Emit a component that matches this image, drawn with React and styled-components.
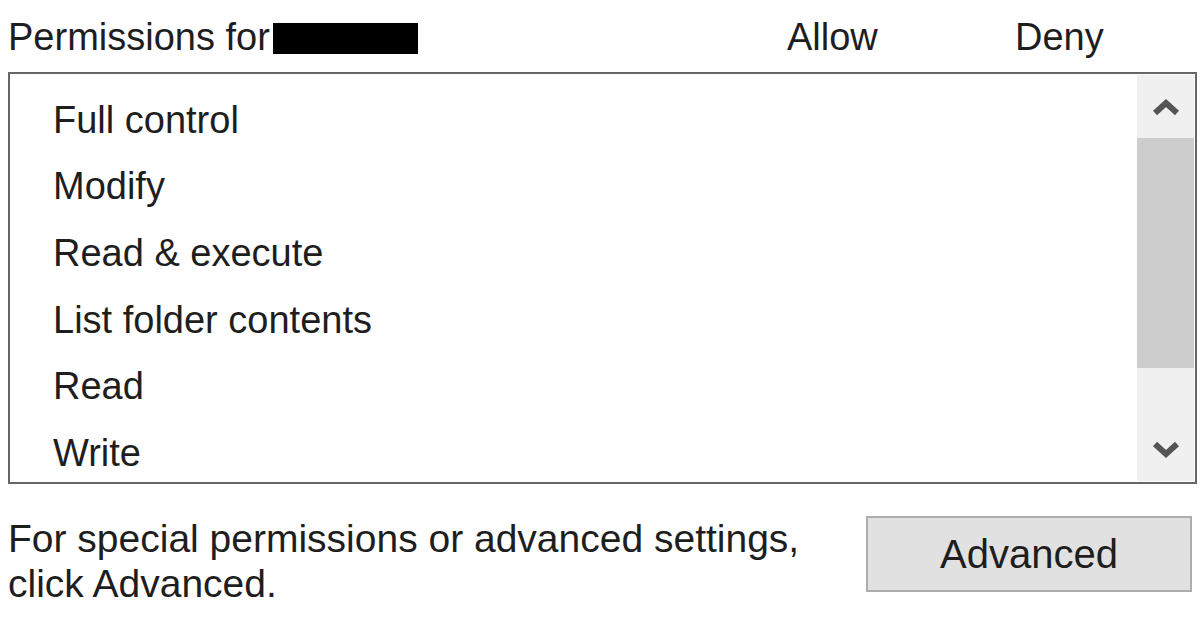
import React from "react";
import styled, { createGlobalStyle } from "styled-components";

const GlobalStyle = createGlobalStyle`
  html, body {
    margin: 0;
    padding: 0;
    background: #ffffff;
  }
  body {
    font-family: "Liberation Sans", Arial, sans-serif;
    color: #1e1e1e;
  }
`;

const Dialog = styled.div`
  width: 1200px;
  height: 627px;
  overflow: hidden;
  display: flex;
  flex-direction: column;
  font-size: 38px;
`;

const HeaderRow = styled.div`
  height: 72px;
  display: grid;
  grid-template-columns: 779px 228px 1fr;
  align-items: center;
  padding-left: 8px;
  padding-top: 2px;
  box-sizing: border-box;
`;

const HeaderLabel = styled.div`
  display: flex;
  align-items: center;
`;

const Redacted = styled.span`
  display: inline-block;
  width: 145px;
  height: 31px;
  background: #000;
  margin-left: 3px;
  margin-top: 2px;
`;

const ColumnTitle = styled.div`
  white-space: nowrap;
`;

const ListBox = styled.div`
  margin-left: 8px;
  width: 1189px;
  height: 412px;
  box-sizing: border-box;
  border: 2px solid #666666;
  display: flex;
  overflow: hidden;
`;

const Rows = styled.div`
  flex: 1;
  padding-top: 13px;
  padding-left: 43px;
  display: flex;
  flex-direction: column;
`;

const Row = styled.div`
  height: 66.6px;
  flex-shrink: 0;
  display: flex;
  align-items: center;
`;

const ScrollBar = styled.div`
  width: 57px;
  margin: 1px 1px 1px 0;
  background: #f0f0f0;
  display: flex;
  flex-direction: column;
`;

const ScrollButton = styled.div`
  height: ${(p) => p.$h}px;
  display: flex;
  align-items: center;
  justify-content: center;
  flex-shrink: 0;
`;

const Thumb = styled.div`
  height: 230px;
  background: #cdcdcd;
  flex-shrink: 0;
`;

const Track = styled.div`
  flex: 1;
`;

const Footer = styled.div`
  display: flex;
  justify-content: space-between;
  align-items: flex-start;
  padding: 32px 8px 0 8px;
`;

const Note = styled.div`
  font-size: 39px;
  line-height: 45px;
`;

const Button = styled.div`
  width: 326px;
  height: 76px;
  box-sizing: border-box;
  background: #e1e1e1;
  border: 2px solid #adadad;
  display: flex;
  align-items: center;
  justify-content: center;
  font-size: 40px;
`;

const Chevron = ({ up }) => (
  <svg width="30" height="18" viewBox="0 0 30 18">
    <polyline
      points={up ? "4,15 15,5 26,15" : "4,3 15,13 26,3"}
      fill="none"
      stroke="#555555"
      strokeWidth="6"
    />
  </svg>
);

const permissions = [
  "Full control",
  "Modify",
  "Read & execute",
  "List folder contents",
  "Read",
  "Write",
];

export default function App() {
  return (
    <>
      <GlobalStyle />
      <Dialog>
        <HeaderRow>
          <HeaderLabel>
            Permissions for
            <Redacted />
          </HeaderLabel>
          <ColumnTitle>Allow</ColumnTitle>
          <ColumnTitle>Deny</ColumnTitle>
        </HeaderRow>
        <ListBox>
          <Rows>
            {permissions.map((p) => (
              <Row key={p}>{p}</Row>
            ))}
          </Rows>
          <ScrollBar>
            <ScrollButton $h={63}>
              <Chevron up />
            </ScrollButton>
            <Thumb />
            <Track />
            <ScrollButton $h={62}>
              <Chevron />
            </ScrollButton>
          </ScrollBar>
        </ListBox>
        <Footer>
          <Note>
            For special permissions or advanced settings,
            <br />
            click Advanced.
          </Note>
          <Button>Advanced</Button>
        </Footer>
      </Dialog>
    </>
  );
}
